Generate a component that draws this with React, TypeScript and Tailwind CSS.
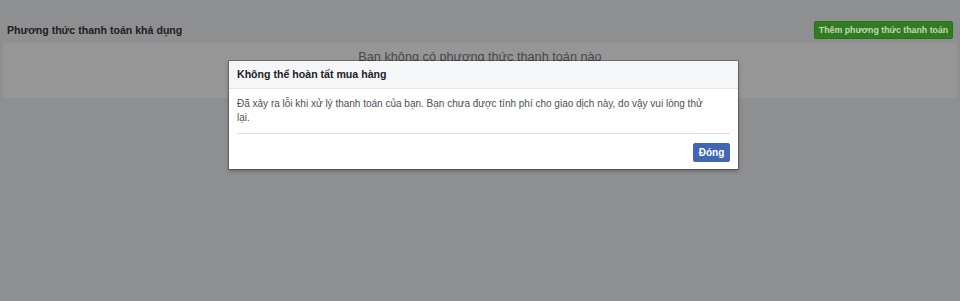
export default function App() {
  return (
    <div className="relative h-[301px] w-[960px] overflow-hidden bg-[#8e8f91] font-['Liberation_Sans',Arial,sans-serif]">
      <div className="flex items-center justify-between pl-[7px] pr-[7px] pt-[21px]">
        <h2 className="mt-[1px] text-[10.6px] font-bold text-[#1f2021]">Phương thức thanh toán khả dụng</h2>
        <button className="h-[18px] w-[139px] rounded-[2px] border border-[#2a7019] bg-[#2f7d1e] text-[8.8px] font-bold leading-[16px] text-[#c6d3c1]">
          Thêm phương thức thanh toán
        </button>
      </div>
      <div className="mx-[3px] mt-[4px] h-[55px] bg-[#969697] pt-[5px] text-center text-[12.7px] text-[#47484a]">
        Bạn không có phương thức thanh toán nào
      </div>

      <div className="absolute left-[229px] top-[61px] w-[509px] bg-white shadow-[0_0_0_1px_rgba(0,0,0,0.25),0_2px_4px_rgba(0,0,0,0.3)]">
        <div className="flex h-[28px] items-center border-b border-[#e5e5e5] bg-[#f5f6f7] px-[8px]">
          <span className="text-[10.6px] font-bold text-[#1d2129]">Không thể hoàn tất mua hàng</span>
        </div>
        <div className="px-[8px] pt-[8px]">
          <p className="pr-[12px] text-[10px] leading-[14px] text-[#4b4f56]">
            Đã xảy ra lỗi khi xử lý thanh toán của bạn. Bạn chưa được tính phí cho giao dịch này, do vậy vui lòng thử lại.
          </p>
          <div className="mt-[8px] flex justify-end border-t border-[#dddfe2] pt-[9px] pb-[7px]">
            <button className="h-[19px] w-[37px] rounded-[2px] border border-[#4267b2] bg-[#4267b2] text-[10px] font-bold leading-[17px] text-white">
              Đóng
            </button>
          </div>
        </div>
      </div>
    </div>
  );
}
